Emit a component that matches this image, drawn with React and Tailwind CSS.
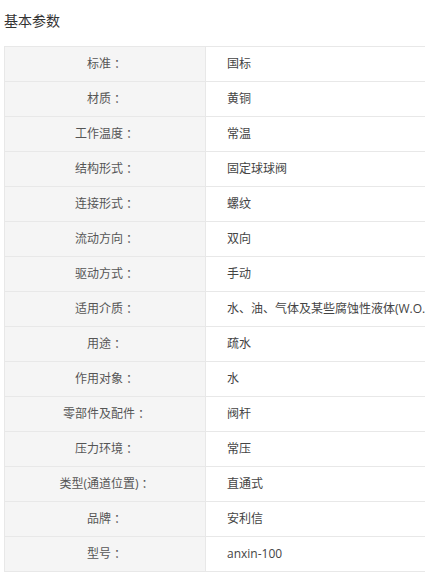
import React from 'react';

const rows = [
  ['标准', '国标'],
  ['材质', '黄铜'],
  ['工作温度', '常温'],
  ['结构形式', '固定球球阀'],
  ['连接形式', '螺纹'],
  ['流动方向', '双向'],
  ['驱动方式', '手动'],
  ['适用介质', '水、油、气体及某些腐蚀性液体(W.O.G)'],
  ['用途', '疏水'],
  ['作用对象', '水'],
  ['零部件及配件', '阀杆'],
  ['压力环境', '常压'],
  ['类型(通道位置)', '直通式'],
  ['品牌', '安利信'],
  ['型号', 'anxin-100'],
];

export default function App() {
  return (
    <div className="w-[425px] h-[573px] overflow-hidden bg-white text-[#333] font-['Open_Sans','Noto_Sans_CJK_SC',sans-serif]">
      <div className="pl-[4px] pt-[11px] h-[46px] text-[14px] leading-[20px] text-[#333]">基本参数</div>
      <div className="ml-[4px] w-[640px] border-t border-l border-[#e8e8e8]">
        {rows.map(([k, v]) => (
          <div key={k} className="flex h-[35px] border-b border-[#e8e8e8] text-[12px]">
            <div className="w-[201px] shrink-0 bg-[#f5f5f5] border-r border-[#e8e8e8] flex items-center justify-center text-[#555]">
              {k}
              <span className="font-['Noto_Sans_CJK_TC',sans-serif]">：</span>
            </div>
            <div className="flex-1 flex items-center pl-[21px] whitespace-nowrap text-[#444]">{v}</div>
          </div>
        ))}
      </div>
    </div>
  );
}
